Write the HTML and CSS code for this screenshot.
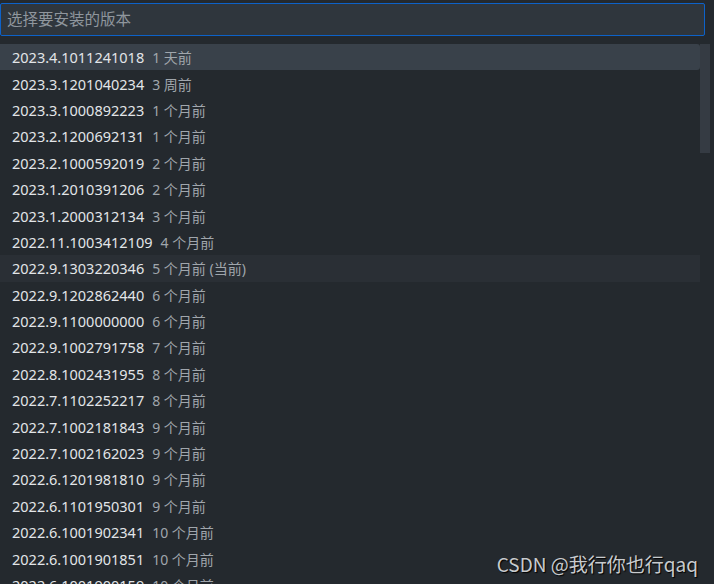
FILE: index.html
```html
<!DOCTYPE html>
<html lang="zh-CN">
<head>
<meta charset="utf-8">
<link rel="stylesheet" href="styles.css">
</head>
<body>
<div class="picker">
  <div class="input-wrap"><div class="input">选择要安装的版本</div></div>
  <div class="list-area">
    <div class="list">
      <div class="row selected"><span class="ver">2023.4.1011241018</span><span class="desc">1 天前</span></div>
      <div class="row"><span class="ver">2023.3.1201040234</span><span class="desc">3 周前</span></div>
      <div class="row"><span class="ver">2023.3.1000892223</span><span class="desc">1 个月前</span></div>
      <div class="row"><span class="ver">2023.2.1200692131</span><span class="desc">1 个月前</span></div>
      <div class="row"><span class="ver">2023.2.1000592019</span><span class="desc">2 个月前</span></div>
      <div class="row"><span class="ver">2023.1.2010391206</span><span class="desc">2 个月前</span></div>
      <div class="row"><span class="ver">2023.1.2000312134</span><span class="desc">3 个月前</span></div>
      <div class="row"><span class="ver">2022.11.1003412109</span><span class="desc">4 个月前</span></div>
      <div class="row current"><span class="ver">2022.9.1303220346</span><span class="desc">5 个月前 (当前)</span></div>
      <div class="row"><span class="ver">2022.9.1202862440</span><span class="desc">6 个月前</span></div>
      <div class="row"><span class="ver">2022.9.1100000000</span><span class="desc">6 个月前</span></div>
      <div class="row"><span class="ver">2022.9.1002791758</span><span class="desc">7 个月前</span></div>
      <div class="row"><span class="ver">2022.8.1002431955</span><span class="desc">8 个月前</span></div>
      <div class="row"><span class="ver">2022.7.1102252217</span><span class="desc">8 个月前</span></div>
      <div class="row"><span class="ver">2022.7.1002181843</span><span class="desc">9 个月前</span></div>
      <div class="row"><span class="ver">2022.7.1002162023</span><span class="desc">9 个月前</span></div>
      <div class="row"><span class="ver">2022.6.1201981810</span><span class="desc">9 个月前</span></div>
      <div class="row"><span class="ver">2022.6.1101950301</span><span class="desc">9 个月前</span></div>
      <div class="row"><span class="ver">2022.6.1001902341</span><span class="desc">10 个月前</span></div>
      <div class="row"><span class="ver">2022.6.1001901851</span><span class="desc">10 个月前</span></div>
      <div class="row"><span class="ver">2022.6.1001900159</span><span class="desc">10 个月前</span></div>
    </div>
    <div class="scrollbar"><div class="thumb"></div></div>
  </div>
  <div class="watermark">CSDN @我行你也行qaq</div>
</div>
</body>
</html>
```

FILE: styles.css
```css
html, body {
  margin: 0;
  padding: 0;
  background: #24292e;
  overflow: hidden;
  height: 584px;
}
.picker {
  position: relative;
  width: 714px;
  height: 584px;
  font-family: "Noto Sans", "Noto Sans CJK SC", sans-serif;
  font-size: 14.5px;
}
.input-wrap {
  padding: 3px 9px 0 0;
}
.input {
  height: 31px;
  border: 1px solid #0d62c9;
  border-radius: 2px;
  background: #2f363d;
  color: #8f969d;
  font-size: 15.5px;
  line-height: 31px;
  padding-left: 6px;
}
.list-area {
  display: flex;
  margin-top: 8px;
}
.list {
  flex: 1;
}
.row {
  height: 26.4px;
  display: flex;
  align-items: center;
  padding-left: 12px;
  gap: 8px;
  white-space: nowrap;
}
.row.selected {
  background: #39414a;
  border-radius: 0 3px 3px 0;
}
.row.current {
  background: #2a2f35;
}
.ver {
  color: #e2e5e8;
}
.desc {
  color: #a0a6ac;
  font-size: 14px;
}
.scrollbar {
  width: 10px;
  margin-right: 4px;
}
.thumb {
  height: 109px;
  background: #353b43;
}
.watermark {
  position: absolute;
  right: 16px;
  bottom: 7px;
  font-family: "Noto Sans CJK SC", "Noto Sans", sans-serif;
  font-size: 19px;
  color: #c8cbce;
  text-shadow: 1px 1px 1px #000;
}
```
